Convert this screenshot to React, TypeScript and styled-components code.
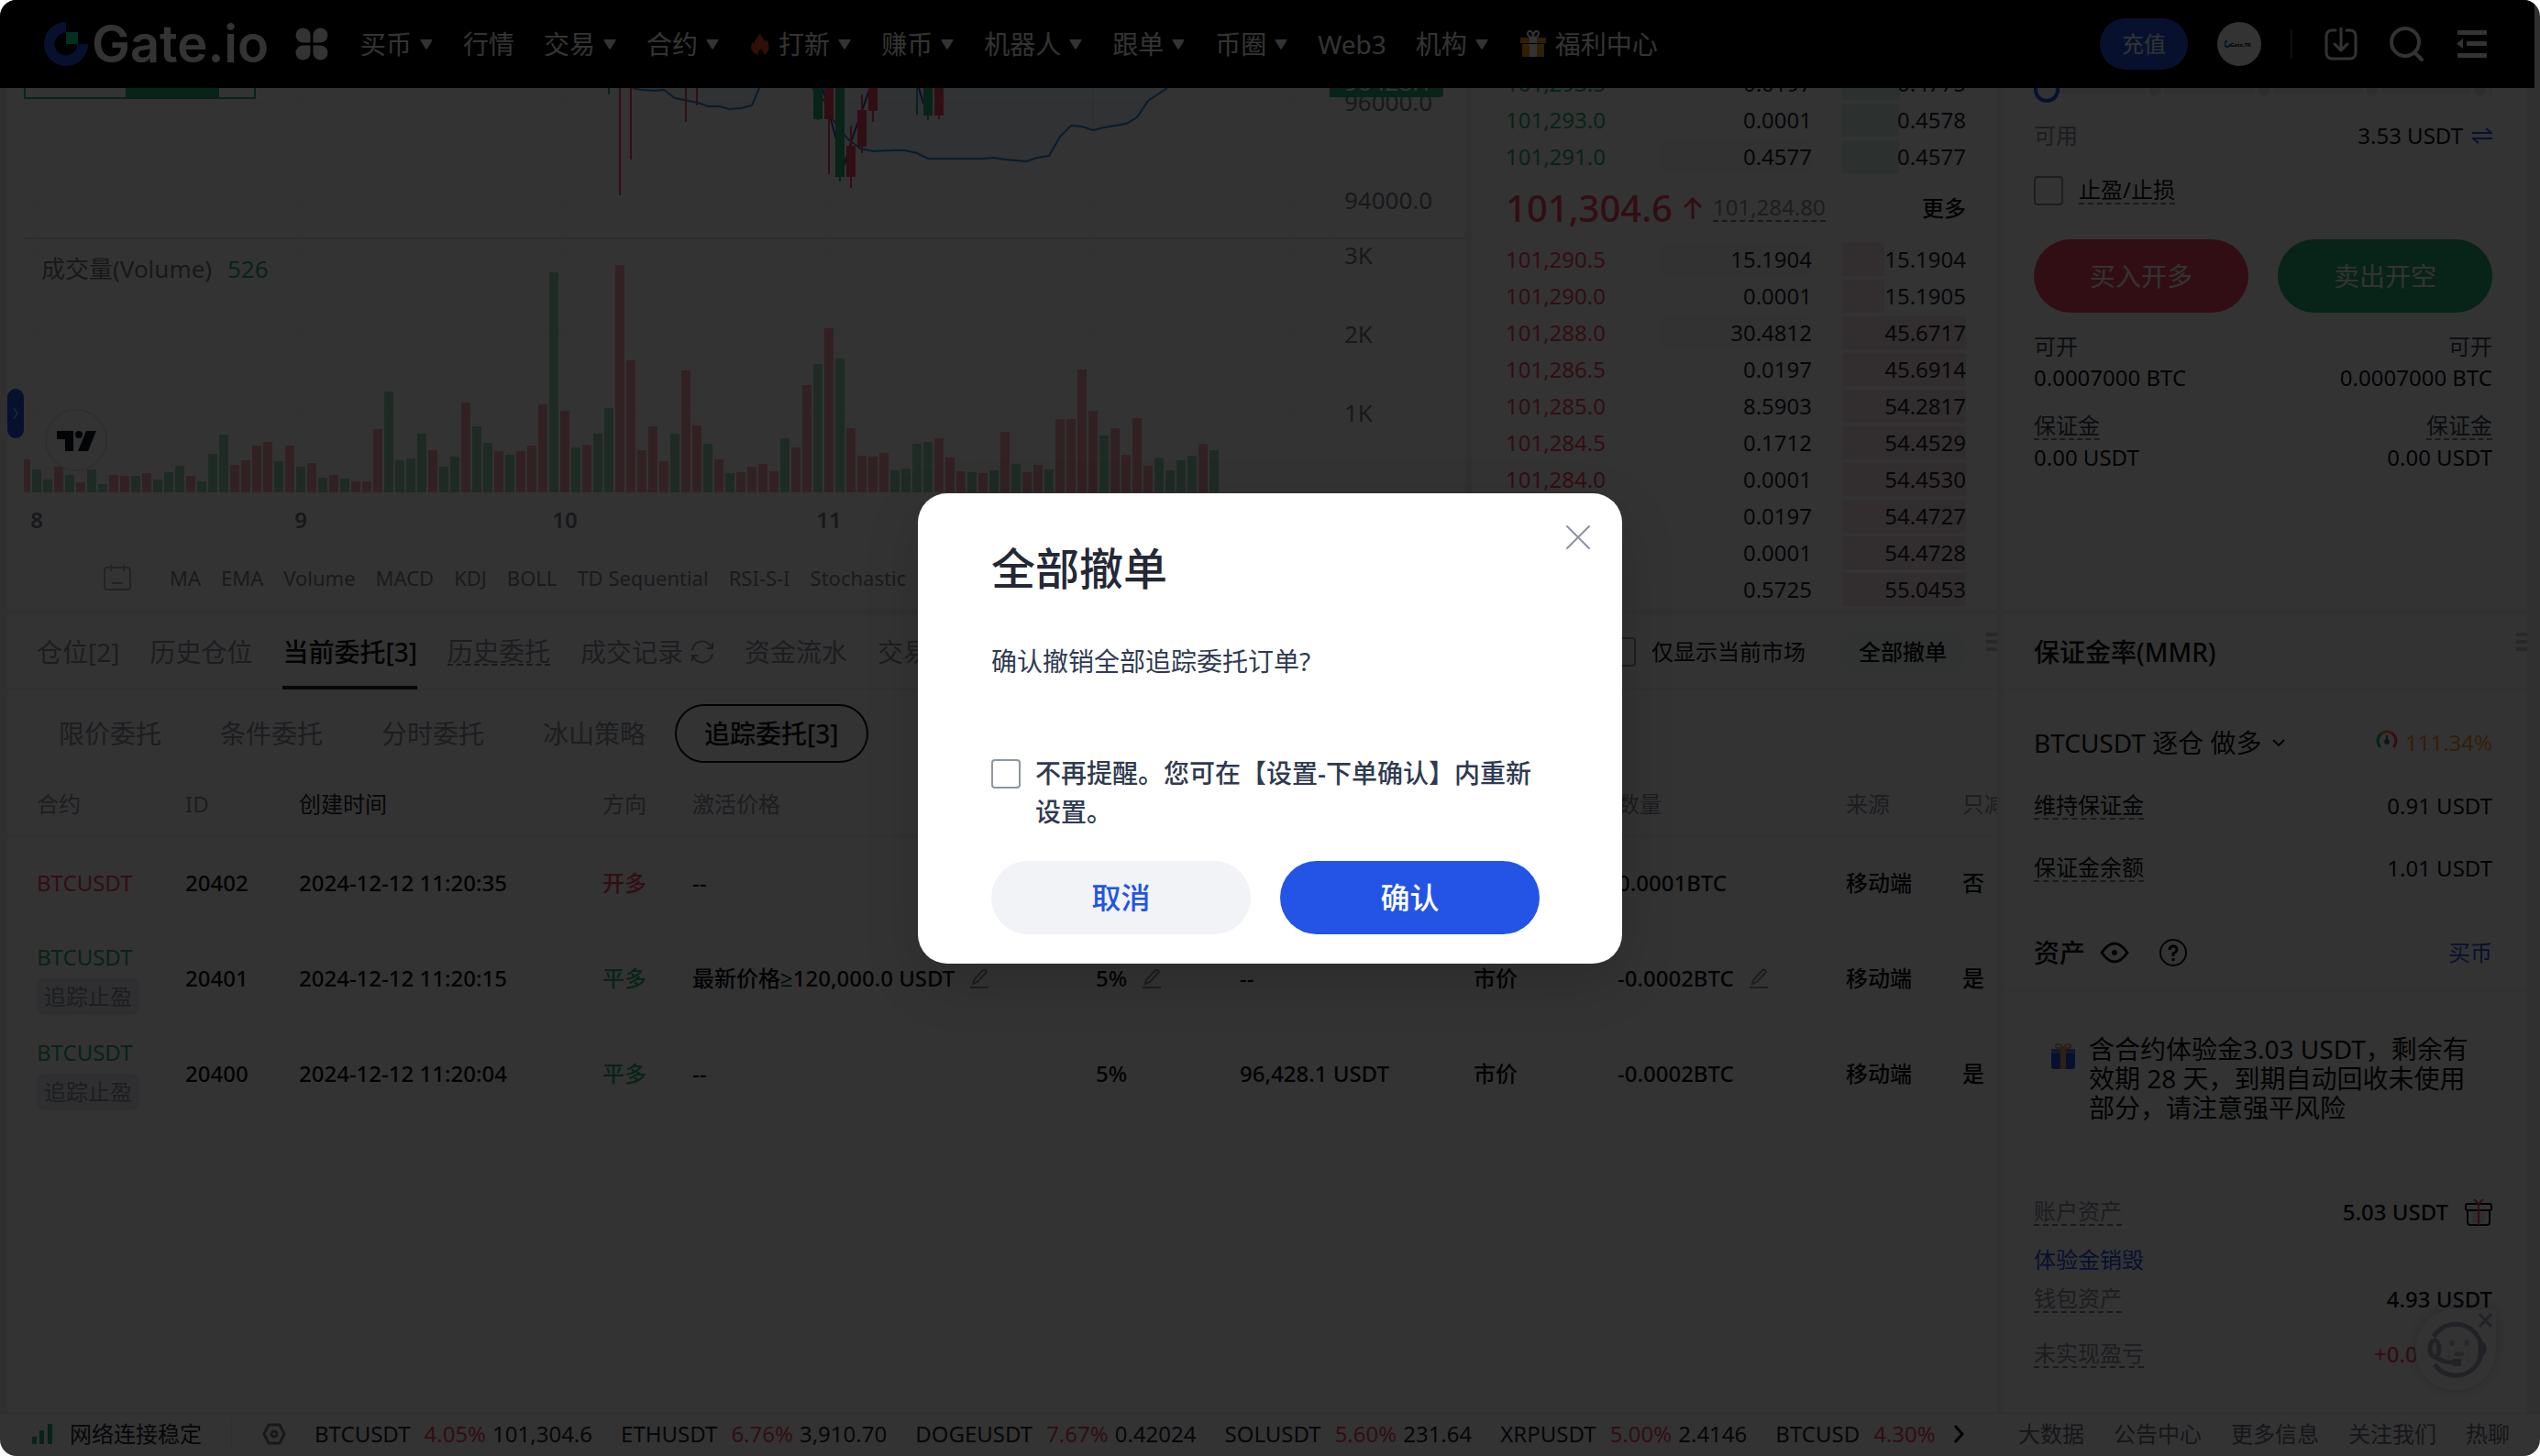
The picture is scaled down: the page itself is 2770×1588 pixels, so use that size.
import React from "react";
import styled, { createGlobalStyle, css } from "styled-components";

const color = {
  red: "#f5475f",
  green: "#2ab075",
  blue: "#2354e6",
  ink: "#1f2330",
  black: "#0e1014",
  muted: "#8c929e",
  line: "#ececee",
  page: "#f1f1f3",
};

const GlobalStyle = createGlobalStyle`
  *, *::before, *::after { box-sizing: border-box; }
  body {
    margin: 0;
    background: #fff;
    color: ${color.black};
    font-family: "Noto Sans", "Open Sans", "Noto Sans CJK SC", sans-serif;
    font-size: 24px;
    line-height: 34px;
  }
  button, input { font: inherit; color: inherit; margin: 0; }
  button { background: none; border: 0; padding: 0; white-space: nowrap; }
  a { color: inherit; text-decoration: none; white-space: nowrap; }
  svg { display: block; flex: none; }
  h1, h2, p { margin: 0; font-weight: inherit; font-size: inherit; }
`;

const Frame = styled.div`
  position: relative;
  display: flex;
  flex-direction: column;
  height: 100vh;
  min-height: 1200px;
  border-radius: 18px;
  overflow: hidden;
  background: ${color.page};
`;

/* ---------- header ---------- */

const Header = styled.header`
  display: flex;
  align-items: center;
  flex: none;
  height: 96px;
  margin-right: 6px;
  padding: 0 52px 0 47px;
  background: #000;
  color: #fff;
`;

const Logo = styled.a`
  display: flex;
  align-items: center;
  gap: 3px;
  margin-right: 28px;
  font-family: Inter, sans-serif;
  font-size: 56px;
  font-weight: 600;
  line-height: 64px;
`;

const Nav = styled.nav`
  display: flex;
  align-items: center;
  gap: 32px;
  margin-left: 34px;
  font-size: 28px;
  line-height: 40px;
`;

const NavItem = styled.a`
  display: flex;
  align-items: center;
  gap: 8px;
`;

const HeaderTools = styled.div`
  display: flex;
  align-items: center;
  gap: 35px;
  margin-left: auto;
`;

const Account = styled.div`
  display: flex;
  align-items: center;
  gap: 32px;
`;

const Deposit = styled.button`
  width: 96px;
  height: 56px;
  border-radius: 28px;
  background: ${color.blue};
`;

const Avatar = styled.button`
  display: flex;
  align-items: center;
  justify-content: center;
  width: 48px;
  height: 48px;
  border-radius: 50%;
  background: #fff;
`;

const HeaderRule = styled.span`
  width: 2px;
  height: 32px;
  background: #444;
`;

/* ---------- grid of panels ---------- */

const Workspace = styled.main`
  display: grid;
  flex: 1;
  min-height: 0;
  grid-template-columns: minmax(0, 1fr) 573px 571px;
  grid-template-rows: 568px minmax(0, 1fr);
  gap: 6px 7px;
  padding: 0 14px 0 8px;
`;

const Panel = styled.section<{ $span?: number }>`
  position: relative;
  display: flex;
  flex-direction: column;
  grid-column: span ${(p) => p.$span ?? 1};
  min-width: 0;
  min-height: 0;
  overflow: hidden;
  background: #fff;
`;

const DashedText = styled.span<{ $tone?: string }>`
  display: inline-block;
  line-height: 28px;
  border-bottom: 2px dashed #7c818c;
  color: ${(p) => p.$tone ?? "inherit"};
  white-space: nowrap;
`;

const Handle = styled.span`
  position: absolute;
  top: 20px;
  right: 0;
  width: 12px;
  height: 20px;
  background: repeating-linear-gradient(#c3c7cf 0 4px, transparent 4px 8px);
`;

const Tick = styled.input.attrs({ type: "checkbox" })`
  appearance: none;
  flex: none;
  width: 32px;
  height: 32px;
  border: 2px solid #8d95a6;
  border-radius: 4px;
  background: #fff;
`;

/* ---------- chart ---------- */

const DrawerTab = styled.button`
  position: absolute;
  top: 328px;
  left: 0;
  display: flex;
  align-items: center;
  justify-content: center;
  width: 18px;
  height: 54px;
  border-radius: 9px;
  background: ${color.blue};
`;

const Indicators = styled.div`
  display: flex;
  align-items: center;
  gap: 22px;
  height: 68px;
  padding-left: 105px;
  color: #7f848f;
  font-size: 22px;
`;

const IndicatorIcon = styled.span`
  margin-right: 20px;
`;

/* ---------- order book ---------- */

const Book = styled(Panel)`
  justify-content: flex-end;
  padding: 0 34px 1px 37px;
`;

const BookRow = styled.div`
  display: grid;
  flex: none;
  grid-template-columns: 1fr 168px 135px;
  align-items: center;
  height: 40px;
  color: ${color.ink};
`;

const BookPrice = styled.span<{ $side: "buy" | "sell" }>`
  color: ${(p) => (p.$side === "buy" ? color.green : color.red)};
`;

const BookAmount = styled.span<{ $lit?: boolean }>`
  height: 36px;
  margin: 0 33px 0 -33px;
  line-height: 36px;
  text-align: right;
  background: ${(p) => (p.$lit ? "#f8f8f8" : "none")};
`;

const BookTotal = styled.span<{ $side: "buy" | "sell"; $depth: number }>`
  ${(p) => {
    const tint = p.$side === "buy" ? "#dceee9" : "#f8e4e8";
    return css`
      background: linear-gradient(${tint}, ${tint}) no-repeat left / ${p.$depth}% 100%;
    `;
  }}
  height: 36px;
  line-height: 36px;
  text-align: right;
`;

const LastPrice = styled.div`
  display: flex;
  flex: none;
  align-items: center;
  height: 72px;
  gap: 12px;
  color: ${color.red};
`;

const LastPriceValue = styled.strong`
  font-size: 40px;
  line-height: 56px;
  font-weight: 500;
`;

const MoreButton = styled.button`
  margin-left: auto;
  color: ${color.black};
  font-weight: 500;
`;

/* ---------- order form ---------- */

const TradePanel = styled(Panel)`
  padding: 0 38px 0 33px;
`;

const Slider = styled.input.attrs({ type: "range" })`
  appearance: none;
  flex: none;
  width: 100%;
  height: 28px;
  margin-top: -12px;
  background:
    radial-gradient(circle, #e3e4e8 6px, #fff 7px 10px, transparent 11px) 120px 0 / 24px 28px no-repeat,
    radial-gradient(circle, #e3e4e8 6px, #fff 7px 10px, transparent 11px) 239px 0 / 24px 28px no-repeat,
    radial-gradient(circle, #e3e4e8 6px, #fff 7px 10px, transparent 11px) 357px 0 / 24px 28px no-repeat,
    radial-gradient(circle, #e3e4e8 6px, #fff 7px 10px, transparent 11px) 475px 0 / 24px 28px no-repeat,
    linear-gradient(#eeeef0, #eeeef0) left center / 100% 8px no-repeat;

  &::-webkit-slider-thumb {
    appearance: none;
    width: 28px;
    height: 28px;
    border: 4px solid ${color.blue};
    border-radius: 50%;
    background: #fff;
  }
`;

const SplitRow = styled.div<{ $top: number }>`
  display: flex;
  align-items: center;
  justify-content: space-between;
  flex: none;
  min-height: 34px;
  margin-top: ${(p) => p.$top}px;
`;

const Muted = styled.span`
  color: ${color.muted};
`;

const FieldName = styled.span`
  color: #3a4152;
`;

const InlineGroup = styled.span<{ $gap: number }>`
  display: inline-flex;
  align-items: center;
  gap: ${(p) => p.$gap}px;
`;

const StopLabel = styled.label`
  display: flex;
  align-items: center;
  gap: 17px;
  margin-top: 27px;
`;

const TradeButtons = styled.div`
  display: grid;
  grid-template-columns: 1fr 1fr;
  gap: 32px;
  margin-top: 37px;
`;

const TradeButton = styled.button<{ $tone: string }>`
  height: 80px;
  border-radius: 40px;
  background: ${(p) => p.$tone};
  color: #fff;
  font-size: 28px;
`;

/* ---------- orders ---------- */

const Tabs = styled.div`
  display: flex;
  align-items: center;
  flex: none;
  gap: 33px;
  height: 82px;
  padding: 0 33px 0 32px;
  border-bottom: 1px solid ${color.line};
  font-size: 28px;
`;

const Tab = styled.button<{ $active?: boolean }>`
  display: flex;
  align-items: center;
  gap: 8px;
  height: 82px;
  border-bottom: 4px solid ${(p) => (p.$active ? color.ink : "transparent")};
  border-top: 4px solid transparent;
  color: ${(p) => (p.$active ? color.black : color.muted)};
  font-weight: ${(p) => (p.$active ? 500 : 400)};
`;

const TabTools = styled.div`
  display: flex;
  align-items: center;
  gap: 36px;
  margin-left: auto;
  font-size: 24px;
`;

const MarketLabel = styled.label`
  display: flex;
  align-items: center;
  gap: 17px;
`;

const CancelAll = styled.button`
  width: 140px;
  height: 46px;
  border-radius: 23px;
  background: #f4f8f8;
  font-weight: 500;
`;

const SubTabs = styled.div`
  display: flex;
  flex: none;
  margin: 16px 0 0 24px;
  font-size: 28px;
`;

const SubTab = styled.button<{ $active?: boolean }>`
  height: 64px;
  padding: 0 30px;
  border: 2px solid ${(p) => (p.$active ? color.black : "transparent")};
  border-radius: 32px;
  color: ${(p) => (p.$active ? color.black : color.muted)};
  font-weight: ${(p) => (p.$active ? 500 : 400)};
`;

const OrderTable = styled.table`
  width: 2252px;
  margin-top: 11px;
  border-collapse: collapse;
  table-layout: fixed;
  white-space: nowrap;
  text-align: left;

  th {
    height: 68px;
    padding: 0;
    border-bottom: 1px solid ${color.line};
    color: ${color.muted};
    font-weight: 400;
  }
  th[aria-sort] { color: ${color.ink}; }
  td { height: 104px; padding: 0; font-weight: 500; }
  th:first-child, td:first-child { padding-left: 32px; }
`;

const Side = styled.span<{ $tone: string }>`
  display: block;
  color: ${(p) => p.$tone};
`;

const Pair = styled(Side)`
  font-weight: 400;
`;

const PairTag = styled.span`
  display: inline-block;
  margin-top: 6px;
  padding: 0 8px;
  border-radius: 8px;
  background: #e9ecf4;
  color: ${color.muted};
  line-height: 40px;
  font-weight: 400;
  vertical-align: top;
`;

/* ---------- assets ---------- */

const CardHead = styled.div<{ $top?: number }>`
  display: flex;
  align-items: center;
  flex: none;
  height: 83px;
  margin-top: ${(p) => p.$top ?? 0}px;
  padding: 0 38px 0 33px;
  border-bottom: 1px solid ${color.line};
`;

const CardTitle = styled.h2`
  font-size: 28px;
  font-weight: 500;
`;

const CardBody = styled.div`
  display: flex;
  flex-direction: column;
  padding: 0 38px 0 33px;
`;

const PositionPicker = styled.button`
  display: flex;
  align-items: center;
  gap: 12px;
  font-size: 28px;
`;

const Ratio = styled.span`
  display: flex;
  align-items: center;
  gap: 8px;
  color: #ff9a2e;
`;

const BlueLink = styled.a`
  color: ${color.blue};
`;

const IconRow = styled.div`
  display: flex;
  flex: 1;
  gap: 32px;
  margin-left: 16px;
`;

const Bonus = styled.p`
  display: flex;
  gap: 14px;
  margin: 47px 14px 0 18px;
  font-size: 28px;
  line-height: 32px;
`;

const BonusIcon = styled.span`
  margin-top: 10px;
`;

const Amount = styled.span<{ $tone?: string }>`
  color: ${(p) => p.$tone ?? color.black};
  font-weight: 500;
`;

const ChatBubble = styled.button`
  position: absolute;
  right: 34px;
  bottom: 25px;
  width: 88px;
  height: 88px;
  border-radius: 44px 0 44px 44px;
  background: rgba(255, 255, 255, 0.92);
  box-shadow: 0 0 14px rgba(60, 70, 130, 0.3);
`;

/* ---------- footer ---------- */

const Footer = styled.footer`
  display: flex;
  align-items: center;
  flex: none;
  height: 47px;
  padding: 0 33px 2px 35px;
  border-top: 1px solid ${color.line};
  background: #fff;
  color: ${color.ink};
`;

const Network = styled.span`
  display: flex;
  align-items: center;
  gap: 19px;
  padding-right: 32px;
  border-right: 1px solid ${color.line};
`;

const Ticker = styled.div`
  display: flex;
  align-items: center;
  flex: 1;
  gap: 31px;
  margin-left: 33px;

  > svg:last-child { margin-left: -12px; }
`;

const Quote = styled.a`
  display: flex;
  gap: 7px;
`;

const Change = styled.span`
  margin-left: 8px;
  color: ${color.red};
`;

const FooterLinks = styled.nav`
  display: flex;
  gap: 32px;
  color: #6c717c;
`;

/* ---------- dialog ---------- */

const Overlay = styled.div`
  position: absolute;
  inset: 0;
  display: flex;
  align-items: center;
  justify-content: center;
  background: rgba(0, 0, 0, 0.8);
`;

const Dialog = styled.div`
  position: relative;
  width: 768px;
  padding: 46px 90px 32px 80px;
  border-radius: 32px;
  background: #fff;
  box-shadow: 0 20px 60px rgba(0, 0, 0, 0.15);
  color: #2f3a50;
  font-size: 28px;
  line-height: 42px;
`;

const DialogTitle = styled.h1`
  color: #252836;
  font-size: 48px;
  font-weight: 500;
  line-height: 72px;
`;

const DialogText = styled.p`
  margin-top: 44px;
`;

const DialogCheck = styled.label`
  display: flex;
  gap: 16px;
  margin-top: 80px;
  font-weight: 500;

  input { margin-top: 6px; }
`;

const DialogActions = styled.div`
  display: grid;
  grid-template-columns: 1fr 1fr;
  gap: 32px;
  margin-top: 33px;
`;

const DialogButton = styled.button<{ $primary?: boolean }>`
  height: 80px;
  border-radius: 40px;
  background: ${(p) => (p.$primary ? color.blue : "#f1f3f7")};
  color: ${(p) => (p.$primary ? "#fff" : color.blue)};
  font-size: 32px;
  font-weight: 500;
`;

const CloseButton = styled.button`
  position: absolute;
  top: 34px;
  right: 34px;
`;

/* ---------- data ---------- */

const navItems: { label: string; menu?: boolean; icon?: "fire" | "gift" }[] = [
  { label: "买币", menu: true },
  { label: "行情" },
  { label: "交易", menu: true },
  { label: "合约", menu: true },
  { label: "打新", menu: true, icon: "fire" },
  { label: "赚币", menu: true },
  { label: "机器人", menu: true },
  { label: "跟单", menu: true },
  { label: "币圈", menu: true },
  { label: "Web3" },
  { label: "机构", menu: true },
  { label: "福利中心", icon: "gift" },
];

const volume =
  "r36 g25 g14 r28 g19 r11 g25 g9 r19 r18 g18 r21 g14 g22 g29 r18 g12 g42 g63 r30 r35 r51 r55 g34 r51 g28 r32 g16 r19 g15 r12 r12 " +
  "r69 g110 g35 g37 g64 r46 g28 g39 r98 g72 g54 r45 g41 r45 r51 r96 g240 r89 g49 r52 g64 g92 r248 r144 r46 r72 r34 g64 r133 r73 g53 r36 " +
  "g21 r22 r28 r31 r23 g59 r49 r117 g140 r179 g146 r70 r40 r39 r43 g24 g26 g53 g55 r59 r38 r23 g22 r21 g24 r66 g31 r22 r30 g25 " +
  "r80 r80 r134 r89 g62 r70 r41 r81 r29 g38 g24 g35 g40 r53 g46";
const bars = volume.split(" ").map((v) => ({ up: v[0] === "g", h: Number(v.slice(1)) }));

// x, body top, body bottom, wick top, wick bottom, rising
const candles: [number, number, number, number, number, boolean][] = [
  [664, 90, 90, 90, 103, true],
  [676, 90, 90, 90, 213, false],
  [688, 90, 90, 90, 174, false],
  [748, 90, 90, 90, 133, false],
  [760, 90, 90, 90, 115, false],
  [892, 90, 130, 90, 131, true],
  [904, 90, 130, 90, 190, false],
  [916, 90, 193, 90, 198, true],
  [928, 159, 193, 137, 205, false],
  [940, 120, 160, 103, 167, false],
  [952, 90, 121, 90, 133, false],
  [1000, 90, 90, 90, 125, true],
  [1012, 90, 126, 90, 131, true],
  [1024, 90, 126, 90, 130, false],
];

const indicators = ["MA", "EMA", "Volume", "MACD", "KDJ", "BOLL", "TD Sequential", "RSI-S-I", "Stochastic"];

type BookEntry = [string, string, string, number, boolean?];
const bids: BookEntry[] = [
  ["101,293.5", "0.0197", "0.4775", 47],
  ["101,293.0", "0.0001", "0.4578", 46],
  ["101,291.0", "0.4577", "0.4577", 46, true],
];
const asks: BookEntry[] = [
  ["101,290.5", "15.1904", "15.1904", 34, true],
  ["101,290.0", "0.0001", "15.1905", 34],
  ["101,288.0", "30.4812", "45.6717", 100, true],
  ["101,286.5", "0.0197", "45.6914", 100],
  ["101,285.0", "8.5903", "54.2817", 100],
  ["101,284.5", "0.1712", "54.4529", 100],
  ["101,284.0", "0.0001", "54.4530", 100],
  ["", "0.0197", "54.4727", 100],
  ["", "0.0001", "54.4728", 100],
  ["", "0.5725", "55.0453", 100],
];

const columns: [string, number][] = [
  ["合约", 194],
  ["ID", 124],
  ["创建时间", 331],
  ["方向", 98],
  ["激活价格", 440],
  ["", 157],
  ["", 255],
  ["", 157],
  ["数量", 249],
  ["来源", 127],
  ["只减仓", 120],
];

const orders = [
  { id: "20402", time: "2024-12-12 11:20:35", close: false, trigger: "--", rate: "", price: "", type: "", qty: "0.0001BTC", reduce: "否", editable: false },
  { id: "20401", time: "2024-12-12 11:20:15", close: true, trigger: "最新价格≥120,000.0 USDT", rate: "5%", price: "--", type: "市价", qty: "-0.0002BTC", reduce: "是", editable: true },
  { id: "20400", time: "2024-12-12 11:20:04", close: true, trigger: "--", rate: "5%", price: "96,428.1 USDT", type: "市价", qty: "-0.0002BTC", reduce: "是", editable: false },
];

const quotes = [
  ["BTCUSDT", "4.05%", "101,304.6"],
  ["ETHUSDT", "6.76%", "3,910.70"],
  ["DOGEUSDT", "7.67%", "0.42024"],
  ["SOLUSDT", "5.60%", "231.64"],
  ["XRPUSDT", "5.00%", "2.4146"],
  ["BTCUSD", "4.30%", ""],
];

/* ---------- icons ---------- */

const GateMark = () => (
  <svg width="50" height="50" viewBox="0 0 50 50">
    <path d="M25 1A24 24 0 1 0 49 25H37.500A12.500 12.500 0 1 1 25 12.500Z" fill={color.blue} />
    <path d="M25 12h13v13H25z" fill="#17e6a1" />
  </svg>
);

const Clover = () => (
  <svg width="38" height="38" viewBox="0 0 38 38" fill="#fff">
    <path d="M17.500 17.500H9A8 8 0 1 1 17.500 9ZM20.500 17.500H29A8 8 0 1 0 20.500 9ZM17.500 20.500H9A8 8 0 1 0 17.500 29ZM20.500 20.500H29A8 8 0 1 1 20.500 29Z" />
  </svg>
);

const Caret = () => (
  <svg width="16" height="12" viewBox="0 0 16 12" fill="#fff">
    <path d="M2 1h12q1 0 .5 1L9 11q-1 1.500-2 0L1.500 2Q1 1 2 1Z" />
  </svg>
);

const Fire = () => (
  <svg width="24" height="26" viewBox="0 0 24 26" fill="#f04a24">
    <path d="M12 1c1 5 5 6 5 10l2-3c4 7 4 13-3 17 0-4-2-5-3-7-1 2-4 3-3 7C2 22 0 17 4 11l2 2c-1-5 4-8 6-12Z" />
  </svg>
);

const NavGift = () => (
  <svg width="32" height="32" viewBox="0 0 32 32">
    <path d="M16 9C8 9 9 1 13 2c3 1 3 7 3 7s0-6 3-7c4-1 5 7-3 7Z" fill="none" stroke="#fff" strokeWidth="2" />
    <path d="M2 9h28v6H2zM4 16h24v14H4z" fill="#e8a018" />
    <path d="M12 9h8v6h-8zM12 16h8v14h-8z" fill="#fff" />
  </svg>
);

const DownloadIcon = () => (
  <svg width="36" height="36" viewBox="0 0 36 36" fill="none" stroke="#fff" strokeWidth="3" strokeLinecap="round" strokeLinejoin="round">
    <path d="M12 3H8a6 6 0 0 0-6 6v19a6 6 0 0 0 6 6h20a6 6 0 0 0 6-6V9a6 6 0 0 0-6-6h-4M18 1v24M11 18l7 7 7-7" />
  </svg>
);

const SearchIcon = () => (
  <svg width="38" height="38" viewBox="0 0 38 38" fill="none" stroke="#fff" strokeWidth="4" strokeLinecap="round">
    <circle cx="17" cy="17" r="15" />
    <path d="m27 28 8 8" />
  </svg>
);

const MenuIcon = () => (
  <svg width="33" height="32" viewBox="0 0 33 32" fill="#fff">
    <rect x="1" y="1" width="32" height="5" rx="1" />
    <rect x="11" y="13" width="22" height="5" rx="1" />
    <rect x="1" y="26" width="32" height="5" rx="1" />
    <path d="M0 15.500 7 10v11Z" />
  </svg>
);

const EditIcon = () => (
  <svg width="20" height="22" viewBox="0 0 20 22" fill="none" stroke={color.muted} strokeWidth="2">
    <path d="M4 13 14 2q3-1 4 2L8 15l-5 2ZM0 21h20" />
  </svg>
);

const RefreshIcon = () => (
  <svg width="26" height="26" viewBox="0 0 26 26" fill="none" stroke={color.muted} strokeWidth="2">
    <path d="M2 11A11 11 0 0 1 23 8M24 3v6h-6M24 15A11 11 0 0 1 3 18M2 23v-6h6" />
  </svg>
);

const VolumeChart = () => {
  const axisText = { fill: "#787b86", fontSize: 26 };
  return (
    <svg width="1590" height="500" viewBox="8 96 1590 500" role="img" aria-label="K线图">
      <g stroke="#eef0f3" strokeWidth="1">
        {[40, 328, 616, 904, 1192, 1408, 1450].map((x) => (
          <line key={x} x1={x} x2={x} y1="96" y2="537" />
        ))}
        {[112, 219, 278, 364, 450].map((y) => (
          <line key={y} x1="26" x2="1450" y1={y} y2={y} />
        ))}
      </g>
      <rect x="26" y="259" width="1572" height="2" fill="#dfe1e6" />
      <path
        d="M881 96 899 106 908 130 925 152 938 162 952 165 975 164 987 164 1000 167 1012 173 1072 173 1084 172 1096 174 1120 176 1131 172 1144 170 1156 149 1168 137 1180 138 1192 142 1204 139 1228 135 1240 128 1252 110 1273 96Z"
        fill="#2196f3"
        fillOpacity="0.08"
      />
      <path d="M690 96 699 98 714 99 724 98 736 107 761 112 772 116 785 116 795 119 808 118 820 115 828 96Z" fill="#2196f3" fillOpacity="0.08" />
      <g fill="none" strokeWidth="2">
        <path d="M690 96 699 98 714 99 724 98 736 107 761 112 772 116 785 116 795 119 808 118 820 115 828 96M886 96 899 110 908 130 925 152 938 162 952 165 975 164 987 164 1000 167 1012 173 1072 173 1084 172 1096 174 1120 176 1131 172 1144 170 1156 149 1168 137 1180 138 1192 142 1204 139 1228 135 1240 128 1252 110 1273 96" stroke="#2f86d6" />
        <path d="M897 96 910 145 920 182 928 155 948 98M1002 96 1007 113" stroke="#3d3fc4" />
      </g>
      {candles.map(([x, top, bottom, wickTop, wickBottom, up]) => (
        <g key={x} fill={up ? color.green : color.red}>
          <rect x={x - 1} y={wickTop} width="2" height={wickBottom - wickTop} />
          <rect x={x - 5} y={top} width="10" height={bottom - top} />
        </g>
      ))}
      {bars.map((b, i) => (
        <rect key={i} x={i ? 23 + 12 * i : 26} y={537 - b.h} width={i ? 10 : 7} height={b.h} fill={b.up ? color.green : color.red} fillOpacity="0.5" />
      ))}
      <path d="M27 90V107H278V90" fill="none" stroke={color.green} strokeWidth="2" />
      <rect x="137" y="90" width="102" height="17" fill={color.green} />
      <g {...axisText}>
        <text x="1466" y="121">96000.0</text>
        <text x="1466" y="228">94000.0</text>
        <text x="1466" y="288">3K</text>
        <text x="1466" y="374">2K</text>
        <text x="1466" y="460">1K</text>
      </g>
      <path d="M1450 90H1574V102Q1574 106 1570 106H1450Z" fill={color.green} />
      <text x="1466" y="99" fill="#fff" fontSize="26">96428.1</text>
      <text x="45" y="303" {...axisText}>成交量(Volume)</text>
      <text x="248" y="303" fill={color.green} fontSize="26">526</text>
      <g fill="#787b86" fontSize="24" fontWeight="600" textAnchor="middle">
        <text x="40" y="576">8</text>
        <text x="328" y="576">9</text>
        <text x="616" y="576">10</text>
        <text x="904" y="576">11</text>
      </g>
      <circle cx="83" cy="480" r="33" fill="#fff" stroke="#e4e6ea" strokeWidth="2" />
      <path d="M62 470h18v22h-9v-13h-9ZM94 470h11l-9 22h-11Z" fill="#131722" />
      <circle cx="86" cy="474" r="4" fill="#131722" />
    </svg>
  );
};

function BookLine({ entry, side }: { entry: BookEntry; side: "buy" | "sell" }) {
  const [price, amount, total, depth, lit] = entry;
  return (
    <BookRow>
      <BookPrice $side={side}>{price}</BookPrice>
      <BookAmount $lit={lit}>{amount}</BookAmount>
      <BookTotal $side={side} $depth={depth}>{total}</BookTotal>
    </BookRow>
  );
}

function Editable({ text, on }: { text: string; on: boolean }) {
  if (!on) return <>{text}</>;
  return (
    <InlineGroup $gap={17}>
      {text}
      <EditIcon />
    </InlineGroup>
  );
}

export default function App() {
  return (
    <Frame>
      <GlobalStyle />
      <Header>
        <Logo href="#">
          <GateMark />
          Gate.io
        </Logo>
        <Clover />
        <Nav>
          {navItems.map((item) => (
            <NavItem key={item.label} href="#">
              {item.icon === "fire" && <Fire />}
              {item.icon === "gift" && <NavGift />}
              {item.label}
              {item.menu && <Caret />}
            </NavItem>
          ))}
        </Nav>
        <HeaderTools>
          <Account>
            <Deposit>充值</Deposit>
            <Avatar aria-label="账户">
              <svg width="32" height="10" viewBox="0 0 32 10">
                <path d="M3 2a3 3 0 1 0 3 3" fill="none" stroke={color.blue} strokeWidth="2" />
                <text x="6" y="8" fontSize="6" fontWeight="700" fill="#000">Gate.TR</text>
              </svg>
            </Avatar>
            <HeaderRule />
          </Account>
          <DownloadIcon />
          <SearchIcon />
          <MenuIcon />
        </HeaderTools>
      </Header>

      <Workspace>
        <Panel>
          <VolumeChart />
          <DrawerTab aria-label="展开">
            <svg width="6" height="14" viewBox="0 0 6 14" fill="none" stroke="#fff" strokeWidth="1">
              <path d="m1 1 4 6-4 6" />
            </svg>
          </DrawerTab>
          <Indicators>
            <IndicatorIcon>
              <svg width="30" height="28" viewBox="0 0 30 28" fill="none" stroke="#a9adb6" strokeWidth="2">
                <rect x="1" y="3" width="28" height="24" rx="3" />
                <path d="M8 0v7M22 0v7M9 20h12" />
              </svg>
            </IndicatorIcon>
            {indicators.map((name) => (
              <button key={name}>{name}</button>
            ))}
          </Indicators>
        </Panel>

        <Book>
          {bids.map((entry) => (
            <BookLine key={entry[0]} entry={entry} side="buy" />
          ))}
          <LastPrice>
            <LastPriceValue>101,304.6</LastPriceValue>
            <svg width="20" height="24" viewBox="0 0 20 24" fill="none" stroke={color.red} strokeWidth="3">
              <path d="M10 24V2M1 11l9-9 9 9" />
            </svg>
            <DashedText $tone={color.muted}>101,284.80</DashedText>
            <MoreButton>更多</MoreButton>
          </LastPrice>
          {asks.map((entry) => (
            <BookLine key={entry[2]} entry={entry} side="sell" />
          ))}
        </Book>

        <TradePanel>
          <Slider aria-label="数量比例" min={0} max={100} defaultValue={0} />
          <SplitRow $top={19}>
            <Muted>可用</Muted>
            <InlineGroup $gap={10}>
              3.53 USDT
              <svg width="22" height="18" viewBox="0 0 22 18" fill="none" stroke={color.blue} strokeWidth="2">
                <path d="M0 6h21l-6-5M22 12H1l6 5" />
              </svg>
            </InlineGroup>
          </SplitRow>
          <StopLabel>
            <Tick />
            <DashedText>止盈/止损</DashedText>
          </StopLabel>
          <TradeButtons>
            <TradeButton $tone={color.red}>买入开多</TradeButton>
            <TradeButton $tone={color.green}>卖出开空</TradeButton>
          </TradeButtons>
          <SplitRow $top={20}>
            <FieldName>可开</FieldName>
            <FieldName>可开</FieldName>
          </SplitRow>
          <SplitRow $top={0}>
            <span>0.0007000 BTC</span>
            <span>0.0007000 BTC</span>
          </SplitRow>
          <SplitRow $top={19}>
            <DashedText $tone="#3a4152">保证金</DashedText>
            <DashedText $tone="#3a4152">保证金</DashedText>
          </SplitRow>
          <SplitRow $top={0}>
            <span>0.00 USDT</span>
            <span>0.00 USDT</span>
          </SplitRow>
        </TradePanel>

        <Panel $span={2}>
          <Tabs>
            <Tab>仓位[2]</Tab>
            <Tab>历史仓位</Tab>
            <Tab $active>当前委托[3]</Tab>
            <Tab>
              <DashedText>历史委托</DashedText>
            </Tab>
            <Tab>
              成交记录
              <RefreshIcon />
            </Tab>
            <Tab>资金流水</Tab>
            <Tab>交易</Tab>
            <TabTools>
              <MarketLabel>
                <Tick />
                仅显示当前市场
              </MarketLabel>
              <CancelAll>全部撤单</CancelAll>
            </TabTools>
          </Tabs>
          <Handle />
          <SubTabs>
            <SubTab>限价委托</SubTab>
            <SubTab>条件委托</SubTab>
            <SubTab>分时委托</SubTab>
            <SubTab>冰山策略</SubTab>
            <SubTab $active>追踪委托[3]</SubTab>
          </SubTabs>
          <OrderTable>
            <colgroup>
              {columns.map(([, width], i) => (
                <col key={i} style={{ width }} />
              ))}
            </colgroup>
            <thead>
              <tr>
                {columns.map(([label], i) => (
                  <th key={i} aria-sort={label === "创建时间" ? "descending" : undefined}>{label}</th>
                ))}
              </tr>
            </thead>
            <tbody>
              {orders.map((o) => {
                const tone = o.close ? color.green : color.red;
                return (
                  <tr key={o.id}>
                    <td>
                      <Pair $tone={tone}>BTCUSDT</Pair>
                      {o.close && <PairTag>追踪止盈</PairTag>}
                    </td>
                    <td>{o.id}</td>
                    <td>{o.time}</td>
                    <td><Side $tone={tone}>{o.close ? "平多" : "开多"}</Side></td>
                    <td><Editable text={o.trigger} on={o.editable} /></td>
                    <td><Editable text={o.rate} on={o.editable} /></td>
                    <td>{o.price}</td>
                    <td>{o.type}</td>
                    <td><Editable text={o.qty} on={o.editable} /></td>
                    <td>移动端</td>
                    <td>{o.reduce}</td>
                  </tr>
                );
              })}
            </tbody>
          </OrderTable>
        </Panel>

        <Panel>
          <CardHead>
            <CardTitle>保证金率(MMR)</CardTitle>
          </CardHead>
          <Handle />
          <CardBody>
            <SplitRow $top={40}>
              <PositionPicker>
                BTCUSDT 逐仓 做多
                <svg width="14" height="8" viewBox="0 0 14 8" fill="none" stroke={color.black} strokeWidth="2">
                  <path d="m1 1 6 6 6-6" />
                </svg>
              </PositionPicker>
              <Ratio>
                <svg width="24" height="28" viewBox="0 0 24 28" fill="none" strokeWidth="3">
                  <path d="M5 19A10 10 0 0 1 6 4" stroke={color.green} />
                  <path d="M6 4A10 10 0 0 1 18 4" stroke="#ff7a2e" />
                  <path d="M18 4A10 10 0 0 1 19 19" stroke={color.red} />
                  <path d="M12 6v7" stroke="#5a6075" strokeWidth="2" />
                  <circle cx="12" cy="13" r="3" fill="#5a6075" />
                </svg>
                111.34%
              </Ratio>
            </SplitRow>
            <SplitRow $top={35}>
              <DashedText>维持保证金</DashedText>
              <span>0.91 USDT</span>
            </SplitRow>
            <SplitRow $top={34}>
              <DashedText>保证金余额</DashedText>
              <span>1.01 USDT</span>
            </SplitRow>
          </CardBody>
          <CardHead $top={34}>
            <CardTitle>资产</CardTitle>
            <IconRow>
              <svg width="32" height="32" viewBox="0 0 32 32" fill="none" stroke={color.black} strokeWidth="3">
                <path d="M2 16q14-20 28 0-14 20-28 0Z" />
                <circle cx="16" cy="16" r="3" fill={color.black} stroke="none" />
              </svg>
              <svg width="32" height="32" viewBox="0 0 32 32" fill="none" stroke={color.black} strokeWidth="2">
                <circle cx="16" cy="16" r="14" />
                <path d="M12 13q0-4 4-4t4 4q0 2-4 4v3M16 22v3" strokeWidth="3" />
              </svg>
            </IconRow>
            <BlueLink href="#">买币</BlueLink>
          </CardHead>
          <CardBody>
            <Bonus>
              <BonusIcon>
                <svg width="28" height="28" viewBox="0 0 28 28">
                  <path d="M1 6h26v7H1z" fill="#5b7ff0" />
                  <path d="M1 11h26v14q0 3-3 3H4q-3 0-3-3Z" fill={color.blue} />
                  <path d="M11 5h6v23h-6z" fill="#d9a45c" />
                  <path d="M14 5Q4 6 6 2q4-3 8 3 4-6 8-3 2 4-8 3Z" fill="none" stroke="#d9a45c" strokeWidth="2" />
                </svg>
              </BonusIcon>
              含合约体验金3.03 USDT，剩余有效期 28 天，到期自动回收未使用部分，请注意强平风险
            </Bonus>
            <SplitRow $top={81}>
              <DashedText $tone={color.muted}>账户资产</DashedText>
              <InlineGroup $gap={18}>
                <Amount>5.03 USDT</Amount>
                <svg width="30" height="30" viewBox="0 0 30 30" fill="none" stroke={color.black} strokeWidth="2">
                  <path d="M8 16h14v11H8z" fill="#fbdfe3" stroke="none" />
                  <rect x="1" y="6" width="28" height="7" rx="2" />
                  <path d="M3 13v13q0 3 3 3h18q3 0 3-3V13" />
                  <path d="M15 6v23M15 6l-5-5M15 6l5-5" stroke={color.red} />
                </svg>
              </InlineGroup>
            </SplitRow>
            <SplitRow $top={18}>
              <BlueLink href="#">体验金销毁</BlueLink>
            </SplitRow>
            <SplitRow $top={9}>
              <DashedText $tone={color.muted}>钱包资产</DashedText>
              <Amount>4.93 USDT</Amount>
            </SplitRow>
            <SplitRow $top={26}>
              <DashedText $tone={color.muted}>未实现盈亏</DashedText>
              <Amount $tone={color.red}>+0.09 USDT</Amount>
            </SplitRow>
          </CardBody>
          <ChatBubble aria-label="在线客服">
            <svg width="88" height="88" viewBox="0 0 88 88" fill="none" stroke="#a3a7bd" strokeWidth="5">
              <path d="M20 30A28 28 0 1 1 21 60" />
              <ellipse cx="21" cy="43" rx="5" ry="9" />
              <path d="M22 52q8 6 20 6" />
              <path d="M71 36a8 8 0 0 1 0 14Z" fill="#a3a7bd" />
              <path d="M41 54h9v8h-9z" fill="#a3a7bd" stroke="none" />
              <path d="M40 34v6M56 34v6M43 48q5 2 10 0" stroke="#b4d3c6" />
              <path d="m70 5 13 14M83 5 70 19" strokeWidth="3" />
            </svg>
          </ChatBubble>
        </Panel>
      </Workspace>

      <Footer>
        <Network>
          <svg width="22" height="22" viewBox="0 0 22 22" fill={color.green}>
            <path d="M0 14h5v8H0zM8 7h5v15H8zM17 0h5v22h-5z" />
          </svg>
          网络连接稳定
        </Network>
        <Ticker>
          <svg width="26" height="24" viewBox="0 0 26 24" fill="none" stroke="#777c88" strokeWidth="3">
            <path d="M7 2h12l5 10-5 10H7L2 12Z" />
            <circle cx="13" cy="12" r="3" />
          </svg>
          {quotes.map(([pair, change, price]) => (
            <Quote key={pair} href="#">
              {pair}
              <Change>{change}</Change>
              {price}
            </Quote>
          ))}
          <svg width="12" height="20" viewBox="0 0 12 20" fill="none" stroke={color.black} strokeWidth="3">
            <path d="m2 1 8 9-8 9" />
          </svg>
        </Ticker>
        <FooterLinks>
          {["大数据", "公告中心", "更多信息", "关注我们", "热聊"].map((label) => (
            <a key={label} href="#">{label}</a>
          ))}
        </FooterLinks>
      </Footer>

      <Overlay>
        <Dialog role="dialog" aria-modal="true" aria-labelledby="cancel-title">
          <CloseButton aria-label="关闭">
            <svg width="28" height="28" viewBox="0 0 28 28" fill="none" stroke="#8a93a5" strokeWidth="2" strokeLinecap="round">
              <path d="m2 2 24 24M26 2 2 26" />
            </svg>
          </CloseButton>
          <DialogTitle id="cancel-title">全部撤单</DialogTitle>
          <DialogText>确认撤销全部追踪委托订单?</DialogText>
          <DialogCheck>
            <Tick />
            <span>不再提醒。您可在【设置-下单确认】内重新设置。</span>
          </DialogCheck>
          <DialogActions>
            <DialogButton>取消</DialogButton>
            <DialogButton $primary>确认</DialogButton>
          </DialogActions>
        </Dialog>
      </Overlay>
    </Frame>
  );
}
